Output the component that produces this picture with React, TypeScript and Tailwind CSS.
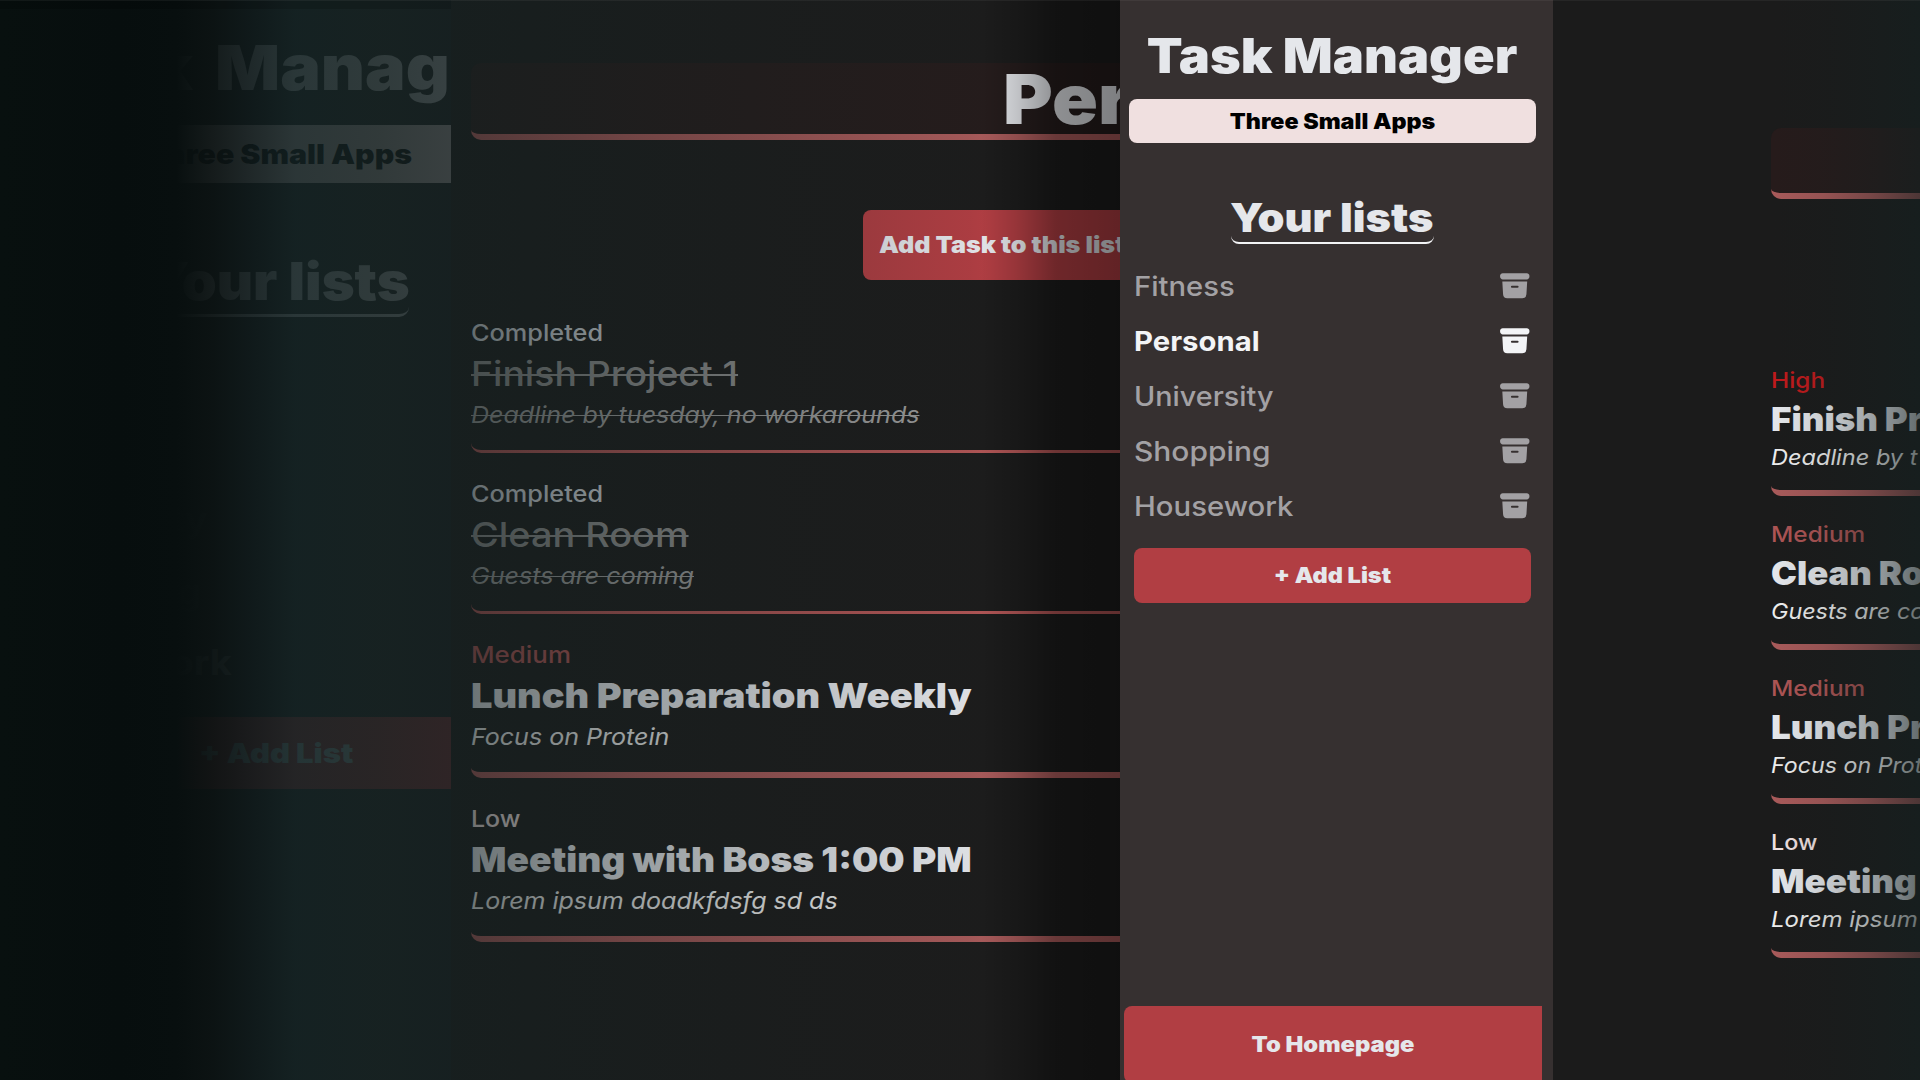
type Line = { text: string; scale: string };

type Task = {
  level: string;
  levelClass: string;
  title: Line;
  note: Line;
  done?: boolean;
};

const tasks: Task[] = [
  {
    level: 'Completed',
    levelClass: 'text-[#d1d5db] scale-x-[1.1]',
    title: { text: 'Finish Project 1', scale: 'scale-x-[1.098]' },
    note: { text: 'Deadline by tuesday, no workarounds', scale: 'scale-x-[1.089]' },
    done: true,
  },
  {
    level: 'Completed',
    levelClass: 'text-[#d1d5db] scale-x-[1.1]',
    title: { text: 'Clean Room', scale: 'scale-x-[1.113]' },
    note: { text: 'Guests are coming', scale: 'scale-x-[1.09]' },
    done: true,
  },
  {
    level: 'Medium',
    levelClass: 'text-[#ad5454] scale-x-[1.125]',
    title: { text: 'Lunch Preparation Weekly', scale: 'scale-x-[1.115]' },
    note: { text: 'Focus on Protein', scale: 'scale-x-[1.088]' },
  },
  {
    level: 'Low',
    levelClass: 'text-[#f0e0e0] scale-x-[1.085]',
    title: { text: 'Meeting with Boss 1:00 PM', scale: 'scale-x-[1.09]' },
    note: { text: 'Lorem ipsum doadkfdsfg sd ds', scale: 'scale-x-[1.087]' },
  },
];

const previewTasks: Task[] = [
  {
    level: 'High',
    levelClass: 'text-[#c01a1c] scale-x-[1.11]',
    title: { text: 'Finish Pr', scale: 'scale-x-[1.068]' },
    note: { text: 'Deadline by t', scale: 'scale-x-[1.07]' },
  },
  {
    level: 'Medium',
    levelClass: 'text-[#ad5454] scale-x-[1.11]',
    title: { text: 'Clean Ro', scale: 'scale-x-[1.062]' },
    note: { text: 'Guests are co', scale: 'scale-x-[1.06]' },
  },
  {
    level: 'Medium',
    levelClass: 'text-[#ad5454] scale-x-[1.11]',
    title: { text: 'Lunch Pr', scale: 'scale-x-[1.07]' },
    note: { text: 'Focus on Prot', scale: 'scale-x-[1.055]' },
  },
  {
    level: 'Low',
    levelClass: 'text-[#f0e0e0] scale-x-[1.062]',
    title: { text: 'Meeting', scale: 'scale-x-[1.072]' },
    note: { text: 'Lorem ipsum', scale: 'scale-x-[1.092]' },
  },
];

const lists = [
  { name: 'Fitness', scale: 'scale-x-[1.082]' },
  { name: 'Personal', scale: 'scale-x-[1.084]', active: true },
  { name: 'University', scale: 'scale-x-[1.065]' },
  { name: 'Shopping', scale: 'scale-x-[1.108]' },
  { name: 'Housework', scale: 'scale-x-[1.085]' },
];

function ArchiveIcon({ className }: { className: string }) {
  return (
    <svg viewBox="0 0 24 24" fill="currentColor" className={className}>
      <path d="M3.375 3C2.339 3 1.5 3.84 1.5 4.875v.75c0 1.036.84 1.875 1.875 1.875h17.25c1.035 0 1.875-.84 1.875-1.875v-.75C22.5 3.839 21.66 3 20.625 3H3.375Z" />
      <path
        fillRule="evenodd"
        clipRule="evenodd"
        d="m3.087 9 .54 9.176A3 3 0 0 0 6.62 21h10.757a3 3 0 0 0 2.995-2.824L20.913 9H3.087Zm6.163 3.75A.75.75 0 0 1 10 12h4a.75.75 0 0 1 0 1.5h-4a.75.75 0 0 1-.75-.75Z"
      />
    </svg>
  );
}

function DimmedSidebar() {
  return (
    <aside className="relative h-full w-[451px] shrink-0 overflow-hidden bg-[#222424]">
      <h1 className="ml-[29px] mt-[30.4px] w-max origin-left scale-x-[1.09] text-[62.5px] font-black leading-[75px] text-gray-200 [word-spacing:8px]">
        Task Manag
      </h1>
      <div className="mt-[19.6px] h-[58px] bg-[#f0e0e0] pl-[145px]">
        <p className="w-max origin-left scale-x-[1.105] text-[27.4px] font-black leading-[58px] text-black">Three Small Apps</p>
      </div>
      <div className="ml-[146px] mt-[68px] h-[66px] w-[263px] rounded-[10px] border-b-[3.5px] border-gray-200">
        <h2 className="w-max origin-left scale-x-[1.077] text-[52px] font-black leading-[62px] text-gray-200">Your lists</h2>
      </div>
      <ul className="ml-[20px] mt-[24.2px]">
        {lists.map((l) => (
          <li
            key={l.name}
            className="h-[71.5px] text-[35px] font-bold leading-[71.5px] text-[#3c4444] last:text-[#747c7c]"
          >
            <span className={`block w-max origin-left ${l.scale}`}>{l.name}</span>
          </li>
        ))}
      </ul>
      <div className="mt-[18.3px] h-[72.5px] bg-[#b13e43] pl-[199px]">
        <p className="w-max origin-left scale-x-[1.13] text-[27.4px] font-black leading-[72.5px] text-[#b4d0d2]">+ Add List</p>
      </div>
      <div className="absolute inset-0 bg-[linear-gradient(90deg,#08100f_0px,#070e0e_120px,#080f0f_176px,rgba(9,16,16,0.985)_188px,rgba(11,18,18,0.955)_212px,rgba(14,24,25,0.925)_248px,rgba(19,33,34,0.89)_295px,rgba(21,33,33,0.87)_380px,rgba(20,31,32,0.83)_451px)]" />
      <div className="absolute inset-x-0 top-0 h-[9px] bg-black/15" />
    </aside>
  );
}

function TaskCard({ task }: { task: Task }) {
  return (
    <li
      className={
        task.done
          ? 'mb-[25px] h-[136px] rounded-[10px] border-b-[3px] border-[#b05555]'
          : 'mb-[25px] h-[139px] rounded-[10px] border-b-[6px] border-[#a85a5a]'
      }
    >
      <p className={`h-9 w-max origin-left text-[23px] font-medium leading-8 ${task.levelClass}`}>{task.level}</p>
      <p
        className={`h-[46.5px] w-max origin-left text-[34px] leading-[42.5px] ${task.title.scale} ${
          task.done ? 'font-medium text-[#8c8c8c] line-through decoration-2' : 'font-black text-gray-200'
        }`}
      >
        {task.title.text}
      </p>
      <p
        className={`w-max origin-left text-[23px] italic leading-8 ${task.note.scale} ${
          task.done ? 'text-[#999] line-through decoration-1' : 'text-[#eee]'
        }`}
      >
        {task.note.text}
      </p>
    </li>
  );
}

function MainPanel() {
  return (
    <main className="relative h-full w-[669px] shrink-0 overflow-hidden bg-[#1c1c1c] pl-5">
      <div className="w-[1300px]">
        <header className="mt-[63px] h-[76.5px] rounded-[10px] border-b-[6px] border-[#a85a5a] bg-[#251c1c] pl-[532px]">
          <h1 className="w-max origin-left scale-x-[1.1] text-[69px] font-black leading-[73px] text-gray-200">Per</h1>
        </header>
        <button className="ml-[391.5px] mt-[70px] block h-[70px] w-[300px] rounded-lg bg-[#b13e43] pl-[16.5px] text-left text-[23px] font-black leading-[71px] text-gray-200">
          <span className="block w-max origin-left scale-x-[1.095]">Add Task to this list</span>
        </button>
        <ul className="mt-[37px]">
          {tasks.map((t) => (
            <TaskCard key={t.title.text} task={t} />
          ))}
        </ul>
      </div>
      <div className="absolute inset-0 bg-[linear-gradient(90deg,rgba(20,32,32,0.62)_0px,rgba(20,32,32,0.56)_30px,rgba(20,32,32,0.36)_190px,rgba(22,32,32,0.2)_350px,rgba(24,32,32,0.04)_520px,rgba(0,0,0,0)_540px)]" />
      <div className="absolute inset-0 bg-[linear-gradient(90deg,rgba(0,0,0,0)_530px,rgba(0,0,0,0.15)_565px,rgba(0,0,0,0.38)_605px,rgba(0,0,0,0.45)_669px)]" />
    </main>
  );
}

function Sidebar() {
  return (
    <aside className="flex h-full w-[433px] shrink-0 flex-col overflow-hidden bg-[#363030]">
      <h1 className="ml-2 mt-[26.2px] w-[408px] shrink-0 scale-x-[1.089] text-center text-[48px] font-black leading-[60px] text-gray-200">
        Task Manager
      </h1>
      <button className="ml-[9px] mt-[12.8px] h-[44.5px] w-[407px] shrink-0 rounded-lg bg-[#f0e0e0] text-[21px] font-black leading-[45px] text-black">
        <span className="block scale-x-[1.108]">Three Small Apps</span>
      </button>
      <div className="ml-[111px] mt-[50px] h-[51px] w-[203px] shrink-0 rounded-lg border-b-[2.7px] border-gray-100">
        <h2 className="-ml-px w-max origin-left scale-x-[1.08] text-[40px] font-black leading-[49px] text-gray-200">Your lists</h2>
      </div>
      <ul className="ml-3.5 mt-[14.2px] w-[397px] shrink-0">
        {lists.map((l) => (
          <li
            key={l.name}
            className={`flex h-[55px] items-center justify-between text-[27px] ${
              l.active ? 'font-bold text-gray-100' : 'font-medium text-[#a3a1a4]'
            }`}
          >
            <span className={`block origin-left leading-[55px] ${l.scale}`}>{l.name}</span>
            <ArchiveIcon className="size-[33.5px]" />
          </li>
        ))}
      </ul>
      <button className="ml-3.5 mt-3.5 h-[55.5px] w-[397px] shrink-0 rounded-lg bg-[#b13e43] text-[21px] font-black leading-[55px] text-gray-200">
        <span className="block scale-x-[1.12]">+ Add List</span>
      </button>
      <button className="-mb-[3px] ml-1 mt-auto h-[77px] w-[418px] shrink-0 rounded-l-lg bg-[#b13e43] text-[21px] font-black leading-[77px] text-gray-200">
        <span className="block scale-x-[1.13]">To Homepage</span>
      </button>
    </aside>
  );
}

function PreviewPanel() {
  return (
    <section className="relative h-full w-[367px] shrink-0 overflow-hidden bg-[#1b1b1b] pl-[217.5px]">
      <div className="w-[900px]">
        <header className="mt-[127.5px] h-[71.5px] rounded-[10px] border-b-[6px] border-[#a85a5a] bg-[#261b1b]" />
        <ul className="mt-[166px]">
          {previewTasks.map((t) => (
            <li key={t.title.text} className="mb-[23.5px] h-[130.5px] rounded-[10px] border-b-[6px] border-[#a85a5a]">
              <p className={`h-[32.7px] w-max origin-left text-[22px] font-medium leading-[30px] ${t.levelClass}`}>{t.level}</p>
              <p className={`h-[44px] w-max origin-left text-[32.7px] font-black leading-[42px] text-gray-200 ${t.title.scale}`}>
                {t.title.text}
              </p>
              <p className={`w-max origin-left text-[22px] italic leading-[30px] text-[#eee] ${t.note.scale}`}>
                {t.note.text}
              </p>
            </li>
          ))}
        </ul>
      </div>
      <div className="absolute inset-0 bg-[linear-gradient(90deg,rgba(20,32,32,0)_220px,rgba(20,32,32,0.12)_270px,rgba(20,32,32,0.32)_315px,rgba(20,32,32,0.62)_367px)]" />
    </section>
  );
}

export default function App() {
  return (
    <div className="relative flex h-[1080px] w-[1920px] overflow-hidden bg-[#1c1c1c] font-['Inter',sans-serif]">
      <DimmedSidebar />
      <MainPanel />
      <Sidebar />
      <PreviewPanel />
      <div className="absolute inset-x-0 top-0 h-px bg-white/5" />
    </div>
  );
}
